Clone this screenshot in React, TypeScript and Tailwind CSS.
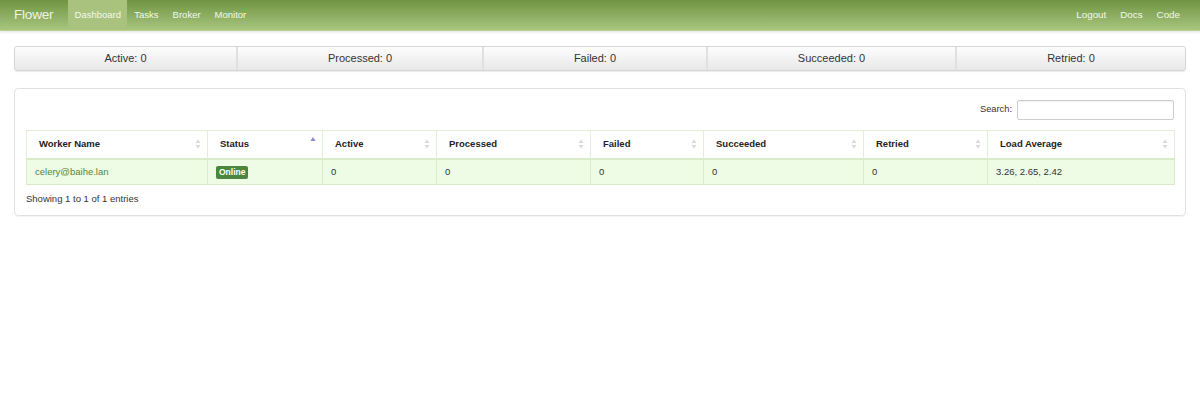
import React from "react";

const SortBoth = () => (
  <svg width="6" height="10" viewBox="0 0 6 10" className="shrink-0">
    <path d="M3 0.5 L5.5 4 L0.5 4 Z" fill="#d9d9d9" />
    <path d="M3 9.5 L5.5 6 L0.5 6 Z" fill="#d9d9d9" />
  </svg>
);

const SortAsc = () => (
  <svg width="6" height="10" viewBox="0 0 6 10" className="shrink-0">
    <path d="M3 1 L5.7 5 L0.3 5 Z" fill="#8b8fcf" />
  </svg>
);

const cols = [
  { name: "Worker Name", w: "w-[181px]", sort: "both" },
  { name: "Status", w: "w-[115px]", sort: "asc" },
  { name: "Active", w: "w-[114px]", sort: "both" },
  { name: "Processed", w: "w-[154px]", sort: "both" },
  { name: "Failed", w: "w-[113px]", sort: "both" },
  { name: "Succeeded", w: "w-[160px]", sort: "both" },
  { name: "Retried", w: "w-[124px]", sort: "both" },
  { name: "Load Average", w: "w-[187px]", sort: "both" },
];

export default function App() {
  return (
    <div
      className="min-h-[400px] w-[1200px] bg-white text-[#333]"
      style={{ fontFamily: '"Liberation Sans", Arial, Helvetica, sans-serif' }}
    >
      {/* Navbar */}
      <div className="h-[31px] flex items-stretch bg-gradient-to-b from-[#6f9441] to-[#a9c67f] border-b border-[#b9d18f] shadow-[0_1px_3px_rgba(0,0,0,0.12)]">
        <div className="pl-[14px] pr-[15px] flex items-center text-[13.5px] font-light text-[#eef3e4] tracking-[-0.2px]">
          Flower
        </div>
        <div className="flex items-stretch text-[9.5px] text-[#f4f7ee]">
          <div className="px-[7px] flex items-center bg-[#a9c37e] w-[59px] justify-center">Dashboard</div>
          <div className="pl-[7px] pr-[7px] flex items-center">Tasks</div>
          <div className="pl-[7px] pr-[7px] flex items-center">Broker</div>
          <div className="pl-[7px] pr-[7px] flex items-center">Monitor</div>
        </div>
        <div className="ml-auto flex items-stretch text-[9.8px] text-[#f4f7ee] pr-[13px]">
          <div className="px-[7px] flex items-center">Logout</div>
          <div className="px-[7px] flex items-center">Docs</div>
          <div className="px-[7px] flex items-center">Code</div>
        </div>
      </div>

      {/* Stats bar */}
      <div className="mt-[15px] mx-[14px] h-[25px] flex rounded-[3px] border border-[#d5d5d5] bg-gradient-to-b from-[#fdfdfd] to-[#e8e8e8] shadow-[0_1px_1px_rgba(0,0,0,0.08)] text-[11px] text-[#333]">
        <div className="w-[223px] flex items-center justify-center border-r-2 border-[#e0e0e0]">Active: 0</div>
        <div className="w-[246px] flex items-center justify-center border-r-2 border-[#e0e0e0]">Processed: 0</div>
        <div className="w-[224px] flex items-center justify-center border-r-2 border-[#e0e0e0]">Failed: 0</div>
        <div className="w-[249px] flex items-center justify-center border-r-2 border-[#e0e0e0]">Succeeded: 0</div>
        <div className="flex-1 flex items-center justify-center">Retried: 0</div>
      </div>

      {/* Panel */}
      <div className="mt-[17px] mx-[14px] h-[128px] rounded-[4px] border border-[#e0e0e0] shadow-[0_1px_1px_rgba(0,0,0,0.04)] px-[11px] pt-[11px]">
        <div className="flex justify-end items-center text-[9.3px] text-[#333]">
          <span className="mr-[5px]">Search:</span>
          <div className="w-[157px] h-[20px] border border-[#ccc] rounded-[2px] bg-white shadow-[inset_0_1px_1px_rgba(0,0,0,0.06)]" />
        </div>
        <table className="mt-[10px] w-[1148px] border-collapse text-[9.5px] table-fixed">
          <thead>
            <tr className="h-[28px]">
              {cols.map((c) => (
                <th
                  key={c.name}
                  className={`${c.w} border border-[#e2f0d8] border-b-2 border-b-[#d9ecc9] bg-white text-left font-bold text-[#222] pl-[12px] pr-[6px]`}
                >
                  <div className="flex items-center justify-between">
                    <span>{c.name}</span>
                    {c.sort === "asc" ? (
                      <span className="-mt-[6px]">
                        <SortAsc />
                      </span>
                    ) : (
                      <SortBoth />
                    )}
                  </div>
                </th>
              ))}
            </tr>
          </thead>
          <tbody>
            <tr className="h-[26px] bg-[#eefbe5]">
              <td className="border border-[#d9ecc9] pl-[8px] text-[#4f8a3a]">celery@baihe.lan</td>
              <td className="border border-[#d9ecc9] pl-[8px]">
                <span className="inline-block bg-[#4b8540] text-white font-bold text-[8.5px] leading-[13px] px-[3px] rounded-[2px]">
                  Online
                </span>
              </td>
              <td className="border border-[#d9ecc9] pl-[8px]">0</td>
              <td className="border border-[#d9ecc9] pl-[8px]">0</td>
              <td className="border border-[#d9ecc9] pl-[8px]">0</td>
              <td className="border border-[#d9ecc9] pl-[8px]">0</td>
              <td className="border border-[#d9ecc9] pl-[8px]">0</td>
              <td className="border border-[#d9ecc9] pl-[8px]">3.26, 2.65, 2.42</td>
            </tr>
          </tbody>
        </table>
        <div className="mt-[7px] text-[9.5px] text-[#333]">Showing 1 to 1 of 1 entries</div>
      </div>
    </div>
  );
}
